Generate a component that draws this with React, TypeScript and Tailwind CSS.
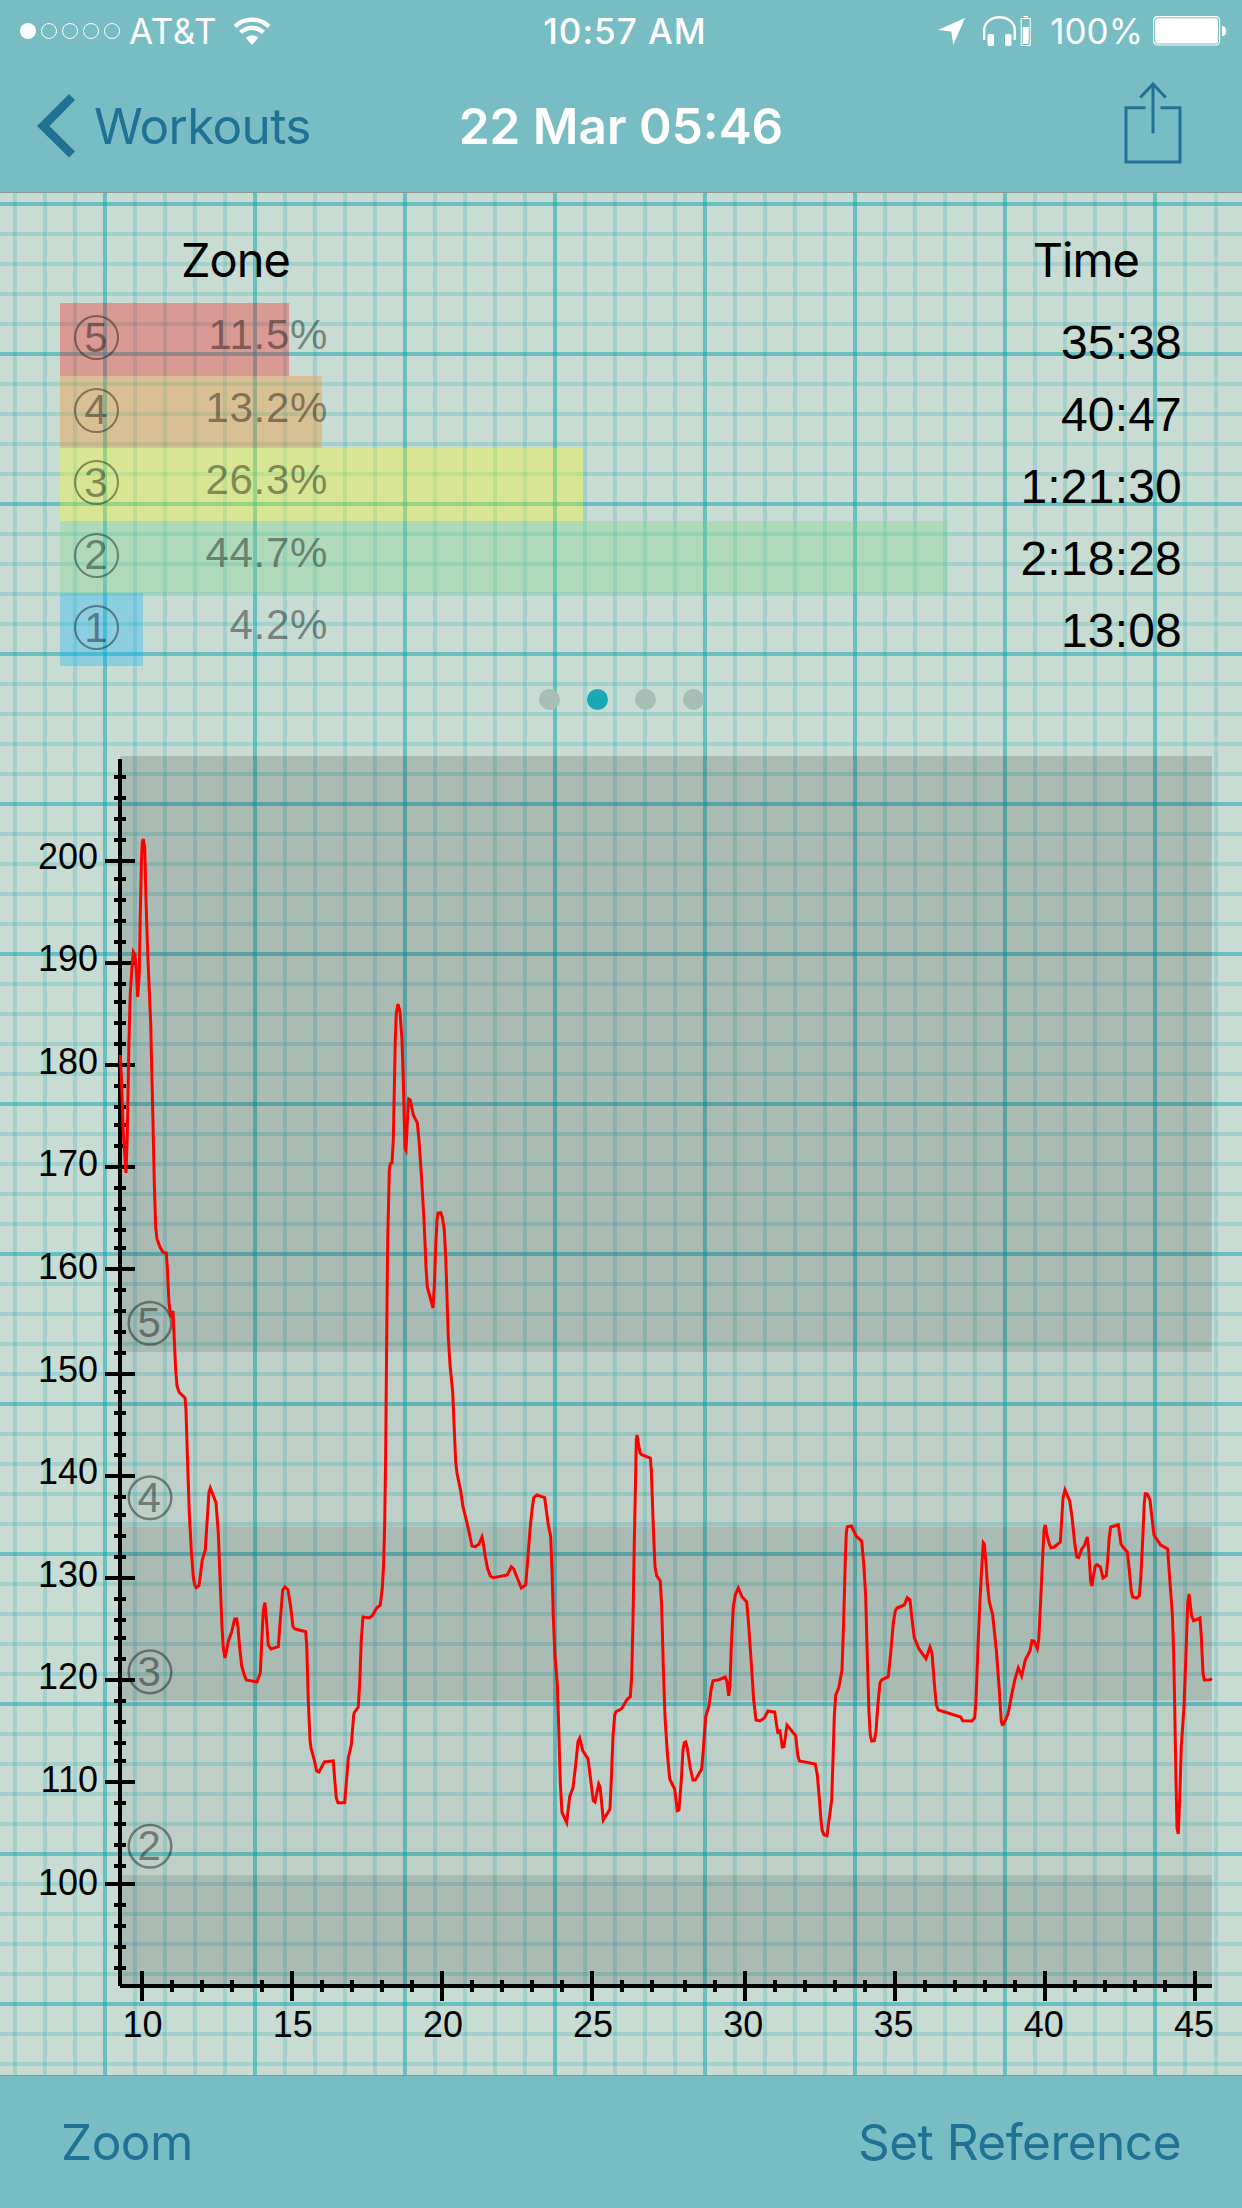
const zones = [
  { zone: 5, percent: 11.5, bar: "bg-[#ff0000]/30" },
  { zone: 4, percent: 13.2, bar: "bg-[#ff8000]/30" },
  { zone: 3, percent: 26.3, bar: "bg-[#ffff00]/30" },
  { zone: 2, percent: 44.7, bar: "bg-[#7bd582]/30" },
  { zone: 1, percent: 4.2, bar: "bg-[#00b0ff]/30" },
]

const times = ["35:38", "40:47", "1:21:30", "2:18:28", "13:08"]

const PERCENT_WIDTH = 19.87

// ruled paper: one line every 30px, every fifth one is heavy
const verticals = Array.from({ length: 41 }, (_, i) => ({
  pos: i === 40 ? 1216 : 15 + i * 30,
  major: i % 5 === 3,
}))
const horizontals = Array.from({ length: 63 }, (_, i) => ({
  pos: 204 + i * 30,
  major: i % 5 === 0,
}))

// chart bands, darker for every other zone
const bands = [
  { y: 756, height: 596, opacity: 0.15 },
  { y: 1352, height: 174.5, opacity: 0.055 },
  { y: 1526.5, height: 174, opacity: 0.15 },
  { y: 1700.5, height: 174.5, opacity: 0.055 },
  { y: 1875, height: 111, opacity: 0.15 },
]

const bandLabels = [
  { zone: 5, y: 1323.3 },
  { zone: 4, y: 1497.7 },
  { zone: 3, y: 1671.9 },
  { zone: 2, y: 1846.2 },
]

// ticks for 208 down to 92 bpm, two beats apart
const yTicks = [
  777, 798, 819, 840, 861, 879, 900, 921, 942, 963, 984, 1002, 1023, 1044, 1065, 1086, 1107, 1125, 1146, 1167,
  1188, 1209, 1230, 1248, 1269, 1290, 1311, 1332, 1353, 1374, 1392, 1413, 1434, 1455, 1476, 1497, 1515, 1536,
  1557, 1578, 1599, 1620, 1638, 1659, 1680, 1701, 1722, 1743, 1761, 1782, 1803, 1824, 1845, 1866, 1884, 1905,
  1926, 1947, 1968,
]
const yLabels = [200, 190, 180, 170, 160, 150, 140, 130, 120, 110, 100]

const xTicks = Array.from({ length: 36 }, (_, i) => 142 + i * 30 + (i >= 18 ? 3 : 0))
const xLabels = [10, 15, 20, 25, 30, 35, 40, 45]

const heartRate = `
120.3,1055 121.3,1075 123.3,1133 126,1173 127.3,1135 128,1093 129,1040 130.3,993 132,967 133.3,952 135,955
136.3,970 137.7,997 139.3,973 140.3,913 141.5,860 142.3,842 143.3,839 144.7,847 146,900 147.7,953 150.7,1023
153,1123 154.3,1183 155.7,1227 157,1239 160,1247 163,1252.5 166.3,1253 167.3,1267 169,1303 170.7,1317 173,1311
174,1333 175.7,1370 177,1386 179,1392 185,1398 186,1410 187.3,1453 189.3,1513 191.3,1550 193.3,1577
194.7,1585 196.3,1587.7 199,1585.7 202.3,1560 205.3,1550 207,1523 209,1492 210.3,1488 216,1502.7 218.3,1533
220,1577 222,1627 223.3,1648 225,1658 228.7,1640 231.7,1631.7 234.7,1619 236.7,1619 238,1627 239.7,1648
241.7,1666 244,1674 246.3,1680 257,1682 260.3,1673 261.7,1643 263.3,1610 265,1602.7 266.7,1623 268.3,1645
271,1649 278.3,1646.7 280.3,1620 282.7,1590 285,1587 288,1589.7 290.7,1607 293,1626.7 295,1629 305.7,1631.7
306.7,1645 308.3,1700 310,1740 311,1748 314.3,1760 316.7,1771 319,1772 324.3,1762 333.3,1761 335,1783
336.3,1798 338,1802.7 344.7,1802.7 346.3,1783 348.3,1758 351.3,1745 353.7,1715 354.3,1712.7 358.3,1707
359.7,1683 361.3,1640 363,1617 369.3,1618 372.3,1615.7 376.7,1608 380.3,1605 382.3,1588 383.7,1563 384.7,1523
385.7,1453 386.3,1383 387,1307 387.7,1240 388.7,1197 389.3,1170 390.3,1163.7 392,1163 393.3,1140 394.3,1090
395.3,1040 396.3,1013 398,1004 400,1012 402,1040 403.3,1080 404.3,1120 405,1148 406,1150 407.3,1123
408.7,1099 410.3,1100 413.3,1115 417.3,1122.7 419,1140 421.7,1180 424,1220 426,1267 427.3,1287 430.3,1298
433,1308 434.3,1287 435.7,1247 437,1220 438,1213 440.7,1212.7 442.3,1217 444.3,1230 445.7,1257 447,1297
448.3,1337 450,1365 452.7,1392 454.3,1430 455.7,1462 457,1473 460.7,1491 463,1506.7 467.3,1524 472,1546
475.3,1546.7 479,1544 482,1537 483.3,1543 485.3,1556.7 487.7,1569 490.3,1576 493.3,1577.7 507.3,1575
511.3,1566.7 513.7,1569 521.3,1588 525.7,1585 527.7,1560 530,1530 532,1510 533.7,1497.7 537,1495 544.7,1497.7
548,1523 550.7,1536.7 552,1570 553.3,1616.7 555,1656.7 557.3,1683 558.7,1726.7 560.3,1783 562,1812.7
566.7,1822.7 569.7,1796.7 573,1787.7 575.7,1765 578,1741.7 579.7,1738 582.7,1750.7 588,1758.7 590.7,1780
593.3,1800.7 595,1802 598.7,1784 600,1786.7 601.7,1803 603.3,1820 610,1809 611.3,1780 613,1736.7 614.7,1715
616,1711.7 621.7,1708.7 626.7,1700 630.3,1696.7 631.7,1676.7 633,1620 634.3,1543 635.7,1473 636.3,1440
637,1435 638.7,1445 640,1453 641.7,1454.7 650.3,1458 651.3,1470 653.3,1526.7 655,1566.7 656.7,1576
660.3,1581 661.7,1606.7 663.3,1666.7 665,1716.7 667.3,1753 669.7,1779 674.7,1789 677.3,1810.7 679,1810
681.3,1780 683,1750 684.3,1742.7 685.7,1742 687.3,1748 690.3,1768 693,1780 695.3,1780 701.7,1769 703.3,1750
705.7,1716.7 709,1706 711,1690 713,1680.7 719,1679.7 725.3,1677 727,1681.7 728.7,1695.7 730,1686.7
731.3,1646.7 733.3,1606.7 735.3,1595 738.3,1588 742,1596.7 746.7,1602 748.3,1620 751.3,1663 753.7,1700
756,1720 760,1721 764.3,1718 768,1711 774.7,1712 776.3,1723 777.7,1732 780,1731 782.3,1747 784,1746.7
787,1725 795.7,1735.7 797.7,1755 799.3,1761 815.3,1764 817.3,1775 819.3,1798 821,1820 822.3,1831 824,1834.7
827,1835.7 829,1820 831.7,1800 833,1760 834.3,1716.7 835.7,1695 838.7,1688 842,1670 843.7,1620 845.3,1560
846.3,1533 847.3,1526.7 851.3,1526 856.7,1536.7 861.7,1541 863.7,1563 865.7,1596.7 867.3,1656.7 869,1713
870.3,1735 871.7,1741 874.3,1740.7 876,1731.7 878,1703 880,1683 881.7,1680 888.3,1676.7 890.7,1653
893.3,1623 895.3,1610.7 897,1608 904.3,1605 907.3,1597.7 910,1599.7 911.7,1616.7 914.3,1637.7 919,1649
926,1658.7 930,1647 932,1653 934.3,1683 936.3,1705 938.3,1710 960.7,1717 962.7,1720.7 972,1721 974.7,1717.7
976,1700 978,1646.7 980,1600 982,1563 983.3,1542.7 984.3,1544 986,1563 987.3,1583 989.3,1601.7 992.7,1615
996.3,1650 999.3,1690 1001.3,1721.7 1002.3,1724.5 1003.7,1724 1008,1714 1012,1693 1015,1679 1018.3,1668
1021.7,1676 1025.3,1660 1030,1650.7 1032,1640.7 1034,1641 1037.3,1648.7 1038.7,1640 1040.7,1600
1042.7,1556.7 1044,1530 1045.3,1525 1047.3,1536.7 1049.3,1544 1051,1547.7 1054.3,1547 1060.3,1542
1061.7,1520 1063,1498 1065,1490 1069.7,1501 1072,1516.7 1074.7,1543 1076.7,1557 1078.7,1557.7 1081.7,1549
1084.3,1545.7 1087.3,1537 1088.7,1550 1090.7,1581.7 1092,1586 1093.3,1576.7 1095.3,1566 1096.7,1564.7
1100.3,1566.7 1103,1578 1106.3,1575.7 1107.7,1560 1109.3,1536.7 1110.7,1527 1118.3,1524.7 1121,1544
1123,1547 1127.3,1552 1129.3,1570 1131.3,1591.7 1132.7,1597 1136.7,1598 1139.3,1596 1140.7,1580 1142.7,1540
1144.3,1503 1145.3,1493.7 1147.3,1494 1150,1500 1152,1518 1154,1535 1160.7,1545 1167.7,1549 1169.3,1573
1172.3,1613 1173.7,1653 1174.7,1706.7 1176,1780 1177,1828 1178.3,1834 1179.7,1800 1181.3,1746.7 1184,1706.7
1186,1653 1187.7,1603 1189,1594 1191.7,1616 1193.7,1620.7 1200,1618 1201.3,1636.7 1203,1673 1204.3,1680
1210,1679.7 1212,1678.7`

function GridPaper() {
  return (
    <svg className="absolute inset-0 h-full w-full" viewBox="0 193 1242 1882" preserveAspectRatio="none">
      {verticals.map(({ pos, major }) => (
        <rect key={pos} x={pos - 2} y={193} width={4} height={1882} fill="#0ca4b0" opacity={major ? 0.5 : 0.19} />
      ))}
      {horizontals.map(({ pos, major }) => (
        <rect key={pos} x={0} y={pos - 2} width={1242} height={4} fill="#0ca4b0" opacity={major ? 0.5 : 0.19} />
      ))}
    </svg>
  )
}

function StatusBar() {
  return (
    <div className="flex h-[60px] items-center pl-5 pr-[15px] pt-0.5 text-[35px] text-white">
      <div className="flex flex-1 items-center">
        <div className="flex gap-[5px]">
          <span className="size-4 rounded-full bg-white" />
          {[1, 2, 3, 4].map((dot) => (
            <span key={dot} className="size-4 rounded-full border border-white" />
          ))}
        </div>
        <span className="ml-[9px] tracking-[0.6px]">AT&amp;T</span>
        <svg className="ml-4 h-[28px] w-[38px]" viewBox="0 0 38 28" fill="none" stroke="white">
          <path d="M2 9.5 A24.5 24.5 0 0 1 36 9.5" strokeWidth="4.4" />
          <path d="M7.6 15.4 A16.5 16.5 0 0 1 30.4 15.4" strokeWidth="4.4" />
          <path d="M19 28 L12.7 20.8 A9 9 0 0 1 25.3 20.8 Z" fill="white" stroke="none" />
        </svg>
      </div>
      <span className="ml-[3px] font-medium tracking-[1px]">10:57 AM</span>
      <div className="flex flex-1 items-center justify-end">
        <svg className="h-[27px] w-[27px]" viewBox="0 0 27 27" fill="white">
          <path d="M27 0 L0 12 L13.3 13.6 L15.2 27 Z" />
        </svg>
        <svg className="ml-[18px] h-[30px] w-[48px]" viewBox="0 0 48 30">
          <path d="M1.2 24 V14.5 C1.2 6.5 8 1.2 16.5 1.2 S31.8 6.5 31.8 14.5 V24" fill="none" stroke="white" strokeWidth="2.4" />
          <rect x="4.5" y="18" width="6.5" height="12" rx="2" fill="white" />
          <rect x="22" y="18" width="6.5" height="12" rx="2" fill="white" />
          <rect x="38.2" y="2.5" width="9" height="27" fill="none" stroke="white" />
          <rect x="40.5" y="0" width="4.5" height="1.2" fill="white" />
          <rect x="39.7" y="11" width="6" height="17" fill="white" />
        </svg>
        <span className="ml-[19px]">100%</span>
        <svg className="ml-[10px] h-[30px] w-[74px]" viewBox="0 0 74 30">
          <rect x="0.6" y="0.6" width="66" height="28.4" rx="4" fill="none" stroke="white" strokeWidth="1.2" />
          <rect x="2.2" y="2.2" width="62.8" height="25.2" rx="2.5" fill="white" />
          <path d="M69 10 C72 10 73.2 12 73.2 15 S72 20 69 20 Z" fill="white" />
        </svg>
      </div>
    </div>
  )
}

function NavBar() {
  return (
    <div className="flex h-[132px] items-center px-[37px] text-[49.5px]">
      <div className="flex flex-1 items-center text-[#207294]">
        <svg className="h-[64px] w-[38px]" viewBox="0 0 38 64" fill="currentColor">
          <path d="M32 0 L38 6 L12.5 32 L38 57.5 L32 63.5 L0 32 Z" />
        </svg>
        <span className="ml-[19px] pt-0.5 tracking-[-0.7px]">Workouts</span>
      </div>
      <span className="pt-0.5 font-semibold text-white">22 Mar 05:46</span>
      <div className="flex flex-1 justify-end text-[#207294]">
        <svg className="-mt-1.5 mr-[23px] h-[82px] w-[58px]" viewBox="0 0 58 82" fill="none" stroke="currentColor" strokeWidth="3">
          <path d="M21.5 25.8 H2 V80 H56 V25.8 H36.5" />
          <path d="M29 51.5 V2 M16.3 15.5 L29 2 L41.7 15.5" />
        </svg>
      </div>
    </div>
  )
}

function ZoneTable() {
  return (
    <div className="h-[473px]">
      <div className="flex h-[110px] items-center justify-between pl-[181px] pr-[103px] pt-[22px] text-[47px] tracking-[-1px] text-black">
        <span>Zone</span>
        <span>Time</span>
      </div>
      <div className="flex pl-[60px] pr-[60px]">
        <div className="w-[900px]">
          {zones.map(({ zone, percent, bar }) => (
            <div key={zone} className="relative h-[72.5px]">
              <div className={`absolute inset-y-0 left-0 ${bar}`} style={{ width: percent * PERCENT_WIDTH }} />
              <div className="relative flex h-full items-center pl-[13.5px] font-['Liberation_Sans',sans-serif] text-[42px] leading-none text-black opacity-40">
                <div className="mb-[3px] flex size-[45px] items-center justify-center rounded-full border-2 border-black">
                  {zone}
                </div>
                <div className="mb-[8px] w-[209.5px] text-right tracking-[0.7px]">{percent.toFixed(1)}%</div>
              </div>
            </div>
          ))}
        </div>
        <div className="flex-1 pt-[4px] text-right font-['Liberation_Sans',sans-serif] text-[48px] leading-[72px] tracking-[0.2px] text-black">
          {times.map((time) => (
            <div key={time}>{time}</div>
          ))}
        </div>
      </div>
    </div>
  )
}

function PageDots() {
  return (
    <div className="flex h-[74px] justify-center gap-[27px] pt-[23px]">
      {[0, 1, 2, 3].map((page) => (
        <span key={page} className={`size-[21px] rounded-full ${page === 1 ? "bg-[#1aa8b5]" : "bg-[#a6beb6]"}`} />
      ))}
    </div>
  )
}

function HeartRateChart() {
  return (
    <svg className="block h-[1335px] w-[1242px]" viewBox="0 740 1242 1335" fontFamily="Liberation Sans, sans-serif">
      {bands.map(({ y, height, opacity }) => (
        <rect key={y} x={120} y={y} width={1092} height={height} opacity={opacity} />
      ))}
      {bandLabels.map(({ zone, y }) => (
        <g key={zone} opacity={0.4}>
          <circle cx={150} cy={y} r={21.3} fill="none" stroke="black" strokeWidth={2.5} />
          <text x={149.3} y={y + 14} fontSize={42} textAnchor="middle">
            {zone}
          </text>
        </g>
      ))}

      <rect x={118} y={759} width={4} height={1227} />
      <rect x={120} y={1984} width={1092} height={4} />
      {yTicks.map((y, i) =>
        i % 5 === 4 ? (
          <rect key={y} x={105} y={y - 2} width={30} height={4} />
        ) : (
          <rect key={y} x={114} y={y - 2} width={12} height={4} />
        ),
      )}
      {xTicks.map((x, i) =>
        i % 5 === 0 ? (
          <rect key={x} x={x - 2} y={1971} width={4} height={30} />
        ) : (
          <rect key={x} x={x - 2} y={1980} width={4} height={12} />
        ),
      )}
      {yLabels.map((label, i) => (
        <text key={label} x={98} y={868.6 + i * 102.6} fontSize={36} textAnchor="end">
          {label}
        </text>
      ))}
      {xLabels.map((label, i) => (
        <text key={label} x={142.5 + i * 150.2} y={2036.8} fontSize={36} textAnchor="middle">
          {label}
        </text>
      ))}

      <polyline points={heartRate} fill="none" stroke="#ff0000" strokeWidth={3} />
    </svg>
  )
}

export default function App() {
  return (
    <div className="w-[1242px] bg-[#78bdc4] font-['Inter',sans-serif] leading-none">
      <header>
        <StatusBar />
        <NavBar />
      </header>
      <main className="relative h-[1884px] border-y border-black/30 bg-[#c8dcd3]">
        <GridPaper />
        <div className="relative">
          <ZoneTable />
          <PageDots />
          <HeartRateChart />
        </div>
      </main>
      <footer className="flex h-[132px] items-center justify-between px-[61px] pt-0.5 text-[49.5px] tracking-[-0.5px] text-[#207294]">
        <span>Zoom</span>
        <span>Set Reference</span>
      </footer>
    </div>
  )
}
